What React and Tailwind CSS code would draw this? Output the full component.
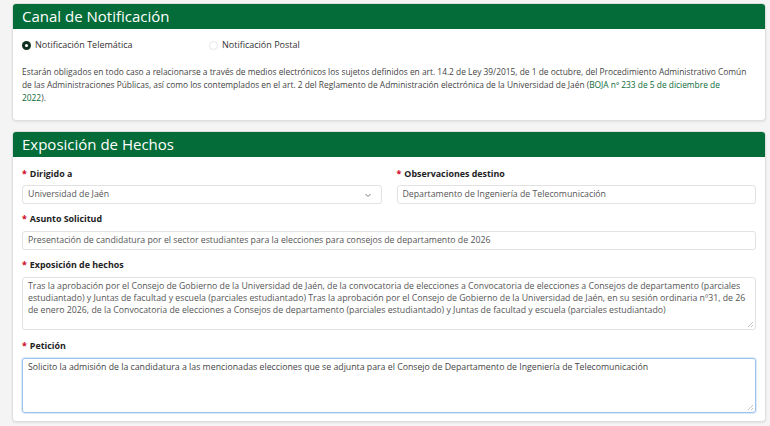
import React from "react";

const Label = ({ children }) => (
  <div className="flex h-[14px] items-center text-[8.9px] font-bold text-[#222]">
    <span className="mr-[3px] text-[#d0021b]">*</span>
    {children}
  </div>
);

const Radio = ({ checked, label }) => (
  <label className="flex items-center gap-[4px] text-[9px] text-[#333]">
    {checked ? (
      <span className="flex h-[9px] w-[9px] items-center justify-center rounded-full bg-[#12301f]">
        <span className="h-[3px] w-[3px] rounded-full bg-white" />
      </span>
    ) : (
      <span className="h-[9px] w-[9px] rounded-full border border-[#e6e6e6] bg-white" />
    )}
    {label}
  </label>
);

const Card = ({ title, children }) => (
  <div className="overflow-hidden rounded-[4px] border border-[#dedede] bg-white shadow-[0_1px_2px_rgba(0,0,0,0.08)]">
    <div className="flex h-[25px] items-center bg-[#046c38] px-[9px] text-[15px] text-white">
      {title}
    </div>
    {children}
  </div>
);

const Resize = () => (
  <svg className="absolute bottom-[2px] right-[2px]" width="6" height="6" viewBox="0 0 6 6">
    <path d="M1 6 L6 1 M4 6 L6 4" stroke="#b5b5b5" strokeWidth="0.8" />
  </svg>
);

export default function App() {
  return (
    <div
      className="min-h-screen bg-[#f4f4f4] pl-[12px] pr-[4px] pt-[3px]"
      style={{ fontFamily: '"Open Sans", "Liberation Sans", sans-serif' }}
    >
      <Card title="Canal de Notificación">
        <div className="px-[9px] pb-[16px]">
          <div className="flex h-[32px] items-center">
            <div className="w-[187px]">
              <Radio checked label="Notificación Telemática" />
            </div>
            <Radio label="Notificación Postal" />
          </div>
          <p className="mt-[4px] text-[8.4px] leading-[13px] text-[#444]">
            Estarán obligados en todo caso a relacionarse a través de medios electrónicos los sujetos definidos en art. 14.2 de Ley 39/2015, de 1 de octubre, del Procedimiento Administrativo Común de las Administraciones Públicas, así como los contemplados en el art. 2 del Reglamento de Administración electrónica de la Universidad de Jaén (<span className="text-[#0b6b3a]">BOJA nº 233 de 5 de diciembre de<br />2022</span>).
          </p>
        </div>
      </Card>

      <div className="mt-[10px]">
        <Card title="Exposición de Hechos">
          <div className="px-[9px] pb-[8px] pt-[10px]">
            <div className="grid grid-cols-2 gap-[15px]">
              <div>
                <Label>Dirigido a</Label>
                <div className="mt-[4px] flex h-[19px] items-center justify-between rounded-[3px] border border-[#e2e2e2] px-[5px] text-[8.75px] text-[#555]">
                  Universidad de Jaén
                  <svg width="8" height="8" viewBox="0 0 8 8" className="mr-[4px]">
                    <path d="M1.5 3 L4 5.5 L6.5 3" fill="none" stroke="#666" strokeWidth="0.9" />
                  </svg>
                </div>
              </div>
              <div>
                <Label>Observaciones destino</Label>
                <div className="mt-[4px] flex h-[19px] items-center rounded-[3px] border border-[#e2e2e2] px-[5px] text-[8.75px] text-[#555]">
                  Departamento de Ingeniería de Telecomunicación
                </div>
              </div>
            </div>

            <div className="mt-[8px]">
              <Label>Asunto Solicitud</Label>
              <div className="mt-[5px] flex h-[19px] items-center rounded-[3px] border border-[#e2e2e2] px-[5px] text-[8.75px] text-[#555]">
                Presentación de candidatura por el sector estudiantes para la elecciones para consejos de departamento de 2026
              </div>
            </div>

            <div className="mt-[8px]">
              <Label>Exposición de hechos</Label>
              <div className="relative mt-[5px] h-[53px] rounded-[3px] border border-[#e2e2e2] px-[5px] pt-[2px] text-[8.75px] leading-[12px] text-[#555]">
                Tras la aprobación por el Consejo de Gobierno de la Universidad de Jaén, de la  convocatoria de elecciones a Convocatoria de elecciones a Consejos de departamento (parciales estudiantado) y Juntas de facultad y escuela (parciales estudiantado) Tras la aprobación por el Consejo de Gobierno de la Universidad de Jaén, en su sesión ordinaria nº31, de 26 de enero 2026, de la  Convocatoria de elecciones a Consejos de departamento (parciales estudiantado) y Juntas de facultad y escuela (parciales estudiantado)
                <Resize />
              </div>
            </div>

            <div className="mt-[9px]">
              <Label>Petición</Label>
              <div className="relative mt-[5px] h-[55px] rounded-[3px] border border-[#9cc3ec] px-[5px] pt-[2px] text-[8.75px] leading-[12px] text-[#444] shadow-[0_0_0_1px_rgba(120,170,230,0.25)]">
                Solicito la admisión de la candidatura a las mencionadas elecciones que se adjunta para el Consejo de Departamento de Ingeniería de Telecomunicación
                <Resize />
              </div>
            </div>
          </div>
        </Card>
      </div>
    </div>
  );
}
